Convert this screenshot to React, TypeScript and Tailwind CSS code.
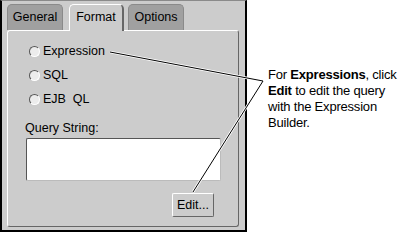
export default function App() {
  const font = { fontFamily: '"Liberation Sans", Arial, sans-serif' };

  return (
    <div className="relative flex w-[398px] h-[232px] bg-white text-black" style={font}>
      {/* dialog window */}
      <div className="w-[247px] h-[232px] shrink-0 bg-[#cccccc] border-l-2 border-r-2 border-b-2 border-black border-t border-t-[#8a8a8a] pt-[3px]">
        <div className="relative z-10 flex items-end h-[27px] pl-[5px] -mb-px text-[12.5px]">
          <div className="w-[56px] h-[26px] mb-px flex items-center justify-center bg-[#a0a0a0] border border-[#8a8a8a] border-b-0 rounded-t-[5px]">
            General
          </div>
          <div className="ml-[6px] w-[55px] h-[27px] flex items-center justify-center bg-[#cccccc] border-l border-t border-white border-r-2 border-r-[#666666] rounded-t-[5px] pb-px">
            Format
          </div>
          <div className="ml-[4px] w-[56px] h-[26px] mb-px flex items-center justify-center bg-[#a0a0a0] border border-[#8a8a8a] border-b-0 rounded-t-[5px]">
            Options
          </div>
        </div>

        <div className="ml-[5px] w-[232px] h-[197px] border border-t-white border-l-white border-r-[#666666] border-b-[#666666] rounded-[3px] text-[12.5px]">
          <div className="pt-[8px] pl-[21px] flex flex-col">
            {["Expression", "SQL", "EJB\u00a0 QL"].map((label) => (
              <div key={label} className="h-[24px] flex items-center gap-[3px]">
                <span className="w-[11px] h-[11px] rounded-full bg-[#ececec] border-[1.5px] border-t-[#555555] border-l-[#555555] border-r-white border-b-white" />
                <span>{label}</span>
              </div>
            ))}
          </div>
          <div className="mt-[10px] ml-[17px] h-[15px] leading-[15px]">Query String:</div>
          <div className="mt-[2px] ml-[18px] w-[195px] h-[43px] bg-white border border-t-[#555555] border-l-[#555555] border-r-[#bbbbbb] border-b-[#bbbbbb] rounded-[2px]" />
          <div className="mt-[12px] ml-[164px] w-[42px] h-[24px] flex items-center justify-center bg-[#cccccc] border border-t-white border-l-white border-r-[#666666] border-b-[#666666] rounded-[2px]">
            Edit...
          </div>
        </div>
      </div>

      {/* callout text */}
      <div className="pt-[67px] pl-[21px] text-[13px] leading-[16px] whitespace-nowrap tracking-[-0.2px]">
        For <b>Expressions</b>, click
        <br />
        <b>Edit</b> to edit the query
        <br />
        with the Expression
        <br />
        Builder.
      </div>

      {/* leader lines */}
      <svg className="absolute inset-0 pointer-events-none" width="398" height="232" viewBox="0 0 398 232">
        <polyline points="110,52 263,81 193,192" fill="none" stroke="white" strokeWidth="2.5" />
        <polyline points="110,52 263,81 193,192" fill="none" stroke="black" strokeWidth="1" />
      </svg>
    </div>
  );
}
